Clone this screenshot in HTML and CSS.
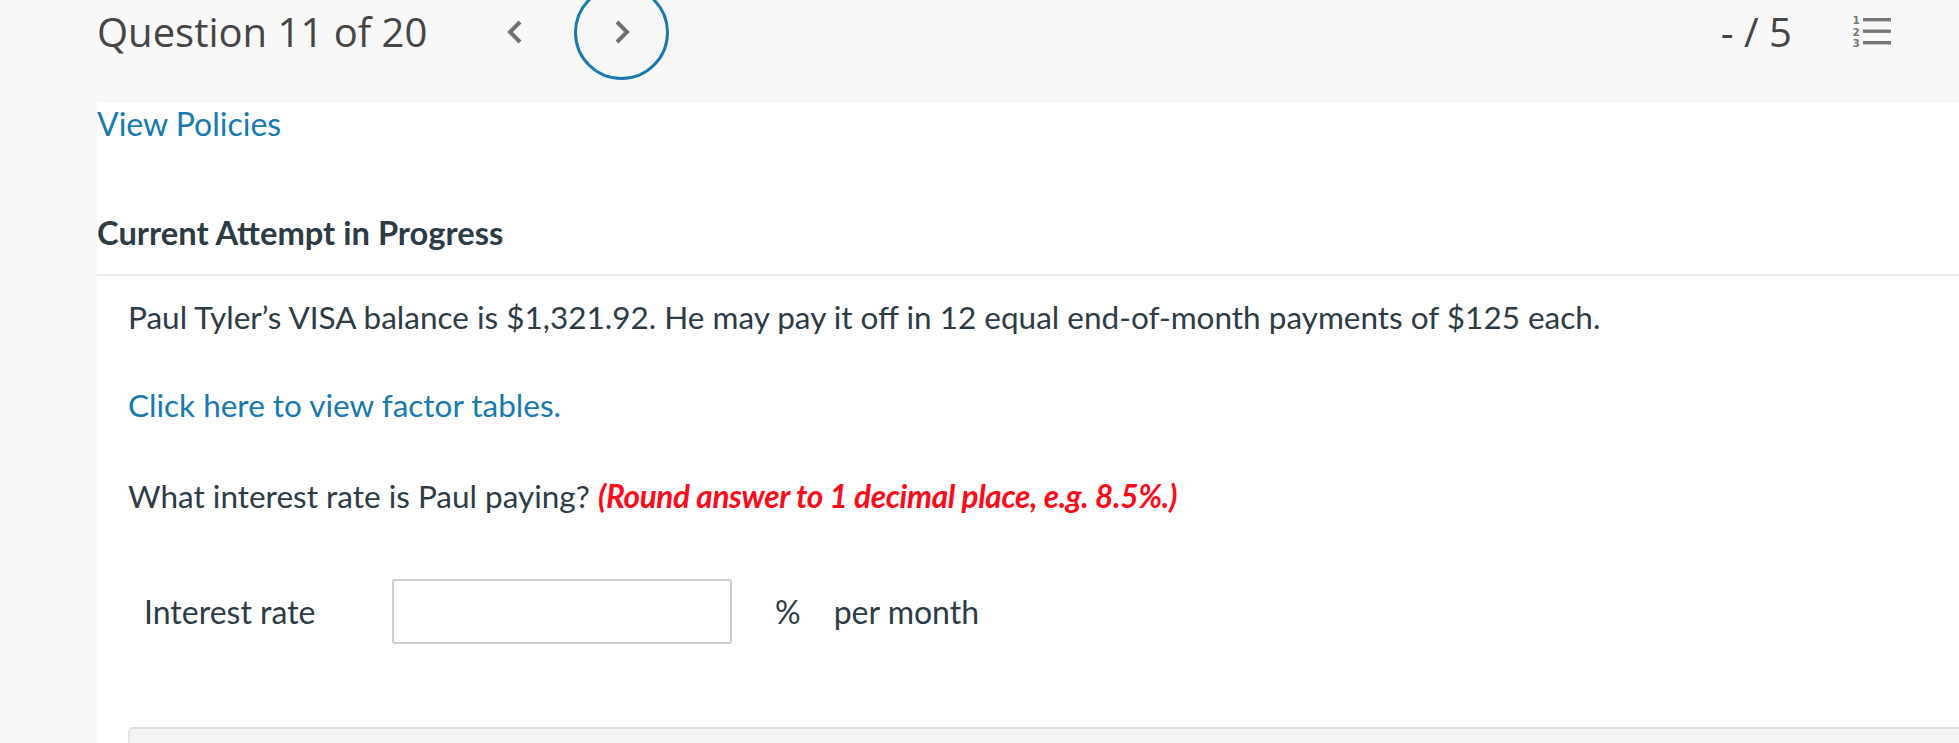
FILE: index.html
```html
<!DOCTYPE html>
<html lang="en">
<head>
<meta charset="utf-8">
<title>Question 11 of 20</title>
<link rel="stylesheet" href="styles.css">
</head>
<body>
<header class="topbar">
  <div class="topbar-row">
    <h1 class="q-title">Question 11 of 20</h1>
    <button class="nav-btn prev" aria-label="Previous question">
      <svg width="16" height="24" viewBox="0 0 16 24"><polyline points="13,2 3,12 13,22" fill="none" stroke="#707070" stroke-width="4"/></svg>
    </button>
    <button class="nav-btn next" aria-label="Next question">
      <svg width="16" height="24" viewBox="0 0 16 24"><polyline points="3,2 13,12 3,22" fill="none" stroke="#707070" stroke-width="4"/></svg>
    </button>
    <div class="spacer"></div>
    <div class="score">- / 5</div>
    <button class="list-btn" aria-label="Question list">
      <svg width="40" height="36" viewBox="0 0 40 36">
        <text x="0.5" y="10" class="num">1</text>
        <text x="0.5" y="21.5" class="num">2</text>
        <text x="0.5" y="33" class="num">3</text>
        <rect x="11" y="4" width="28" height="3.4" fill="#777"/>
        <rect x="11" y="15.5" width="28" height="3.4" fill="#777"/>
        <rect x="11" y="27" width="28" height="3.4" fill="#777"/>
      </svg>
    </button>
  </div>
</header>
<main class="panel">
  <a class="policies" href="#">View Policies</a>
  <h2 class="attempt">Current Attempt in Progress</h2>
  <div class="divider"></div>
  <section class="question">
    <p class="q-text first">Paul Tyler’s VISA balance is $1,321.92. He may pay it off in 12 equal end-of-month payments of $125 each.</p>
    <p class="q-link"><a href="#">Click here to view factor tables.</a></p>
    <p class="q-text">What interest rate is Paul paying? <em class="hint">(Round answer to 1 decimal place, e.g. 8.5%.)</em></p>
    <div class="answer-row">
      <label class="ans-label" for="rate">Interest rate</label>
      <input id="rate" class="ans-input" type="text">
      <span class="unit">%</span>
      <span class="per">per month</span>
    </div>
    <div class="footer-box"></div>
  </section>
</main>
</body>
</html>
```

FILE: styles.css
```css
html, body {
  margin: 0;
  padding: 0;
  background: #f8f8f8;
  height: 100%;
  overflow: hidden;
}
body {
  font-family: "Lato", "Liberation Sans", sans-serif;
  color: #2d3b45;
}
.topbar {
  height: 103px;
  padding-left: 97px;
  padding-right: 67px;
  box-sizing: border-box;
  background: #f8f8f8;
}
.topbar-row {
  height: 64px;
  display: flex;
  align-items: center;
}
.q-title {
  margin: 0;
  font-family: "Open Sans", "Liberation Sans", sans-serif;
  font-weight: 400;
  font-size: 40px;
  line-height: 64px;
  color: #454545;
}
.nav-btn {
  background: none;
  border: none;
  padding: 0;
  display: flex;
  align-items: center;
  justify-content: center;
  cursor: pointer;
}
.nav-btn.prev {
  width: 16px;
  height: 24px;
  margin-left: 80px;
}
.nav-btn.next {
  width: 95px;
  height: 95px;
  flex: none;
  border-radius: 50%;
  border: 3px solid #1a79ad;
  box-sizing: border-box;
  margin-left: 51px;
}
.spacer { flex: 1; }
.score {
  font-family: "Open Sans", "Liberation Sans", sans-serif;
  font-size: 40px;
  line-height: 64px;
  color: #454545;
}
.list-btn {
  background: none;
  border: none;
  padding: 0;
  margin-left: 60px;
  width: 40px;
  height: 36px;
  display: flex;
}
.list-btn .num {
  font-family: "DejaVu Sans", sans-serif;
  font-weight: 700;
  font-size: 10.5px;
  fill: #777;
}
.panel {
  margin-left: 97px;
  background: #fff;
  min-height: 640px;
  padding-top: 2px;
}
.policies {
  display: block;
  font-size: 32px;
  line-height: 38px;
  color: #1779ad;
  text-decoration: none;
}
.attempt {
  margin: 71px 0 0 0;
  font-size: 32.7px;
  font-weight: 700;
  line-height: 38px;
  color: #2d3b45;
}
.divider {
  margin-top: 22px;
  height: 2px;
  background: #ececec;
}
.question {
  padding-left: 31px;
  padding-top: 22px;
}
.question p {
  margin: 0 0 53px 0;
  font-size: 31.5px;
  line-height: 38px;
}
.question p.first {
  margin-bottom: 50px;
}
.q-link a {
  color: #1779ad;
  text-decoration: none;
}
.hint {
  color: #fb0a1a;
  font-weight: 700;
  font-style: italic;
  letter-spacing: -0.33px;
}
.answer-row {
  display: flex;
  align-items: center;
  padding-left: 16px;
  margin-top: 64px;
  height: 65px;
}
.ans-label {
  width: 248px;
  font-size: 32px;
}
.ans-input {
  width: 340px;
  height: 65px;
  box-sizing: border-box;
  border: 2px solid #cfcfcf;
  border-radius: 3px;
  background: #fff;
  font-size: 28px;
  padding: 0 10px;
}
.unit {
  margin-left: 43px;
  font-size: 32px;
}
.per {
  margin-left: 33px;
  font-size: 32px;
}
.footer-box {
  margin-top: 83px;
  height: 60px;
  background: #f4f4f4;
  border-top: 2px solid #dddddd;
  border-left: 2px solid #e6e6e6;
  border-top-left-radius: 5px;
}
```
